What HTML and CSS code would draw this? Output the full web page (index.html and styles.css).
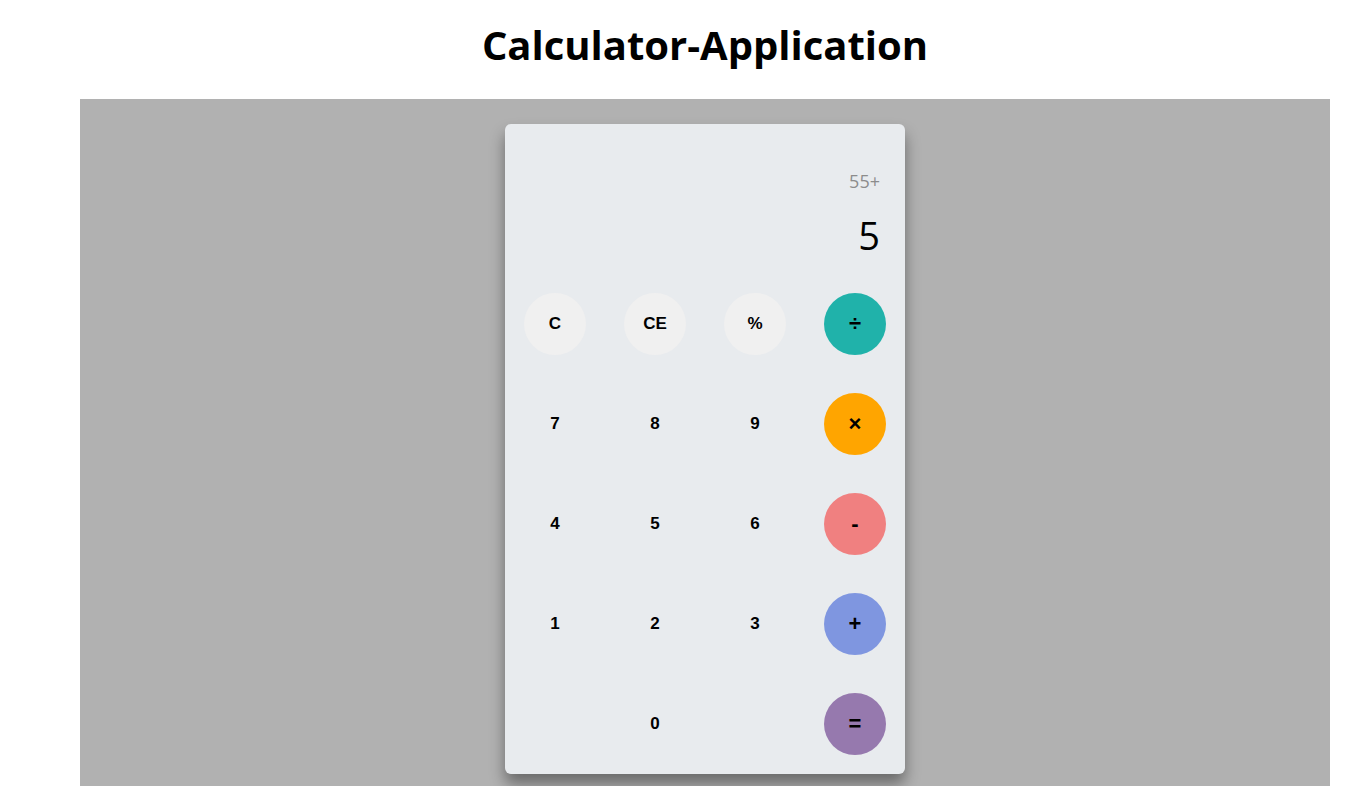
FILE: index.html
```html
<!DOCTYPE html>
<html>
<head>
<meta charset="utf-8">
<link rel="stylesheet" href="styles.css">
</head>
<body>
<div class="page">
  <h1 class="title">Calculator-Application</h1>
  <div class="stage">
    <div class="calc">
      <div class="display">
        <div class="expr">55+</div>
        <div class="result">5</div>
      </div>
      <div class="keys">
        <button class="key fn">C</button>
        <button class="key fn">CE</button>
        <button class="key fn">%</button>
        <button class="key op div">÷</button>
        <button class="key">7</button>
        <button class="key">8</button>
        <button class="key">9</button>
        <button class="key op mul">×</button>
        <button class="key">4</button>
        <button class="key">5</button>
        <button class="key">6</button>
        <button class="key op sub">-</button>
        <button class="key">1</button>
        <button class="key">2</button>
        <button class="key">3</button>
        <button class="key op add">+</button>
        <span class="key empty"></span>
        <button class="key">0</button>
        <span class="key empty"></span>
        <button class="key op eq">=</button>
      </div>
    </div>
  </div>
</div>
</body>
</html>
```

FILE: styles.css
```css
html, body {
  margin: 0;
  padding: 0;
  background: #ffffff;
  overflow: hidden;
}
.page {
  margin-left: 80px;
  width: 1250px;
  font-family: "Open Sans", sans-serif;
}
.title {
  margin: 0;
  height: 99px;
  box-sizing: border-box;
  padding-top: 19px;
  text-align: center;
  font-size: 40px;
  font-weight: 700;
  line-height: 52px;
  color: #000;
}
.stage {
  background: #b1b1b1;
  height: 687px;
  box-sizing: border-box;
  padding-top: 25px;
  display: flex;
  justify-content: center;
  align-items: flex-start;
}
.calc {
  width: 400px;
  height: 650px;
  background: #e8ebee;
  border-radius: 6px;
  box-shadow: 0 10px 15px rgba(0, 0, 0, 0.4);
  display: flex;
  flex-direction: column;
}
.display {
  height: 150px;
  box-sizing: border-box;
  padding: 44px 25px 0 0;
  display: flex;
  flex-direction: column;
  align-items: flex-end;
}
.expr {
  font-size: 18px;
  line-height: 26px;
  color: #8c8c8c;
}
.result {
  margin-top: 16px;
  font-size: 38px;
  line-height: 50px;
  color: #000;
}
.keys {
  display: grid;
  grid-template-columns: repeat(4, 100px);
  grid-auto-rows: 100px;
  place-items: center;
}
.key {
  width: 62px;
  height: 62px;
  border-radius: 50%;
  border: none;
  padding: 0;
  background: transparent;
  font-family: "Liberation Sans", Arial, sans-serif;
  font-weight: 700;
  font-size: 17px;
  color: #000;
}
.fn { background: #f0f0f0; }
.op { font-size: 22px; }
.div { background: #20b2aa; }
.mul { background: #ffa500; }
.sub { background: #f08080; }
.add { background: #7f96e0; }
.eq { background: #9679ae; }
.empty { background: transparent; }
```
